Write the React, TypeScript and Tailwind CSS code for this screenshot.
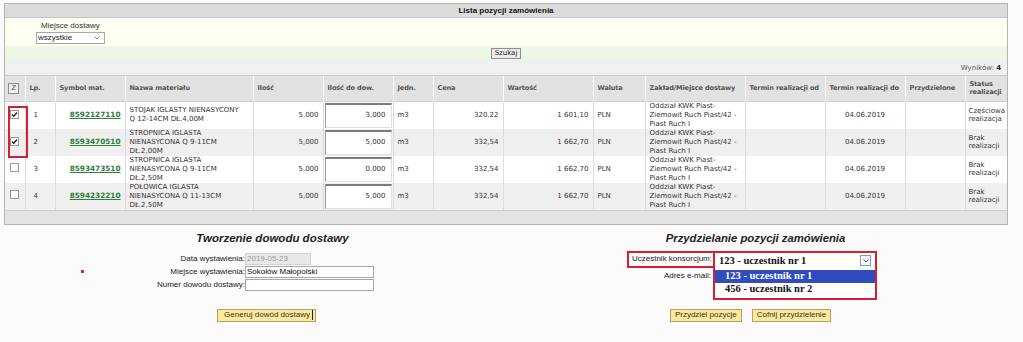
import React from "react";

const cols = [20, 30, 70, 128, 70, 70, 40, 70, 90, 52, 100, 80, 80, 60, 44];

const rows = [
  { checked: true, lp: "1", sym: "8592127110", name: ["STOJAK IGLASTY NIENASYCONY", "Q 12-14CM DŁ.4,00M"], il: "5,000", ildo: "3,000", cena: "320,22", wart: "1 601,10", status: ["Częściowa", "realizacja"] },
  { checked: true, lp: "2", sym: "8593470510", name: ["STROPNICA IGLASTA", "NIENASYCONA Q 9-11CM", "DŁ.2,00M"], il: "5,000", ildo: "5,000", cena: "332,54", wart: "1 662,70", status: ["Brak", "realizacji"] },
  { checked: false, lp: "3", sym: "8593473510", name: ["STROPNICA IGLASTA", "NIENASYCONA Q 9-11CM", "DŁ.2,50M"], il: "5,000", ildo: "0,000", cena: "332,54", wart: "1 662,70", status: ["Brak", "realizacji"] },
  { checked: false, lp: "4", sym: "8594232210", name: ["POŁOWICA IGLASTA", "NIENASYCONA Q 11-13CM", "DŁ.2,50M"], il: "5,000", ildo: "5,000", cena: "332,54", wart: "1 662,70", status: ["Brak", "realizacji"] },
];

function Check({ checked }: { checked: boolean }) {
  return (
    <span className="inline-flex h-[9px] w-[9px] items-center justify-center border border-[#9a9a9a] bg-white">
      {checked && (
        <svg width="7" height="7" viewBox="0 0 7 7">
          <path d="M1 3.5 L2.8 5.3 L6 1.5" stroke="#222" strokeWidth="1.4" fill="none" />
        </svg>
      )}
    </span>
  );
}

const th = "border-r border-white px-[4px] text-left align-middle font-bold text-[#555] whitespace-nowrap";
const td = "border-r border-[#dcdcdc] px-[4px] align-middle";

export default function App() {
  return (
    <div className="h-[342px] w-[1023px] overflow-hidden bg-[#fbfbfb] pt-[3px] font-['Liberation_Sans',Arial,sans-serif] text-[#222]">
      {/* main panel */}
      <div className="ml-[4px] w-[1004px] border border-[#b4b4b4]">
        <div className="flex h-[14px] items-center justify-center border-b border-[#c4c4c4] bg-[#dcdcdc] text-[8px] font-bold text-[#111]">
          Lista pozycji zamówienia
        </div>
        <div className="h-[28px] bg-[#fefef2] pl-[31px] pt-[3px]">
          <div className="pl-[5px] text-[8px] leading-[9px] text-[#333]">Miejsce dostawy</div>
          <div className="mt-[2px] flex h-[12px] w-[69px] items-center justify-between border border-[#a9a9a9] bg-white pl-[1px] pr-[4px] text-[8px] text-[#222]">
            <span>wszystkie</span>
            <svg width="6" height="4" viewBox="0 0 6 4">
              <path d="M0.5 0.5 L3 3 L5.5 0.5" stroke="#6a7a8a" strokeWidth="0.9" fill="none" />
            </svg>
          </div>
        </div>
        <div className="flex h-[14px] items-center justify-center bg-[#eef6e5]">
          <button className="h-[11px] border border-[#8e8e8e] bg-[#ececec] px-[3px] text-[7px] leading-[9px] text-[#222] font-['DejaVu_Sans',Verdana,sans-serif]">
            Szukaj
          </button>
        </div>
        <div className="flex h-[16px] items-center justify-end border-b border-[#c9c9c9] bg-[#f0f0f0] pr-[6px] pt-[1px] text-[7px] text-[#555] font-['DejaVu_Sans',Verdana,sans-serif]">
          Wyników:&nbsp;<b className="text-[#222]">4</b>
        </div>
        <div className="relative">
          <table className="w-[1002px] table-fixed border-collapse font-['DejaVu_Sans',Verdana,sans-serif] text-[7px] leading-[9px]">
            <colgroup>
              {cols.map((w, i) => (
                <col key={i} style={{ width: i === cols.length - 1 ? w - 2 : w }} />
              ))}
            </colgroup>
            <thead>
              <tr className="h-[25px] border-b border-[#cfcfcf] bg-[#e2e2e2] text-[6.6px] tracking-[-0.15px]">
                <th className="border-r border-white pl-[3px] text-left">
                  <span className="inline-flex h-[11px] w-[11px] items-center justify-center border border-[#8c8c8c] bg-[#eeeeee] text-[7px] font-normal text-[#444]">
                    Z
                  </span>
                </th>
                <th className={th}>Lp.</th>
                <th className={th}>Symbol mat.</th>
                <th className={th}>Nazwa materiału</th>
                <th className={th}>Ilość</th>
                <th className={th}>Ilość do dow.</th>
                <th className={th}>Jedn.</th>
                <th className={th}>Cena</th>
                <th className={th}>Wartość</th>
                <th className={th}>Waluta</th>
                <th className={th + " px-[2px]"}>Zakład/Miejsce dostawy</th>
                <th className={th + " px-[2px]"}>Termin realizacji od</th>
                <th className={th + " px-[2px]"}>Termin realizacji do</th>
                <th className={th}>Przydzielone</th>
                <th className={th + " border-r-0 px-[2px] leading-[8px]"}>
                  Status
                  <br />
                  realizacji
                </th>
              </tr>
            </thead>
            <tbody className="text-[#333]">
              {rows.map((r, i) => (
                <tr key={i} className={"h-[27px] " + (i % 2 === 1 ? "bg-[#efefef]" : "bg-white")}>
                  <td className={td + " pl-[5px]"}>
                    <Check checked={r.checked} />
                  </td>
                  <td className={td + " pl-[8px]"}>{r.lp}</td>
                  <td className={td + " text-right"}>
                    <a className="text-[7.3px] font-bold text-[#2e7d3b] underline">{r.sym}</a>
                  </td>
                  <td className={td + " whitespace-nowrap"}>
                    {r.name.map((n, k) => (
                      <div key={k}>{n}</div>
                    ))}
                  </td>
                  <td className={td + " text-right"}>{r.il}</td>
                  <td className="border-r border-[#dcdcdc] p-[1px] align-middle">
                    <div className="flex h-[25px] items-center justify-end border-t-2 border-l border-r border-b border-t-[#7b7b7b] border-l-[#9a9a9a] border-r-[#e0e0e0] border-b-[#e0e0e0] bg-white pr-[5px]">
                      {r.ildo}
                    </div>
                  </td>
                  <td className={td}>m3</td>
                  <td className={td + " text-right"}>{r.cena}</td>
                  <td className={td + " text-right"}>{r.wart}</td>
                  <td className={td}>PLN</td>
                  <td className={td + " whitespace-nowrap"}>
                    <div>Oddział KWK Piast-</div>
                    <div>Ziemowit Ruch Piast/42 -</div>
                    <div>Piast Ruch I</div>
                  </td>
                  <td className={td}></td>
                  <td className={td + " text-center"}>04.06.2019</td>
                  <td className={td}></td>
                  <td className="px-[3px] align-middle leading-[8px]">
                    <div>{r.status[0]}</div>
                    <div>{r.status[1]}</div>
                  </td>
                </tr>
              ))}
            </tbody>
          </table>
          {/* annotation box around selected checkboxes */}
          <div className="pointer-events-none absolute left-[3px] top-[30px] h-[52px] w-[20px] border-2 border-[#d42030]"></div>
        </div>
        <div className="h-[14px] border-t border-[#cfcfcf] bg-[#e4e4e4]"></div>
      </div>

      {/* bottom sections */}
      <div className="flex pl-[31px] pt-[5px]">
        {/* left */}
        <div className="w-[483px]">
          <div className="text-center text-[11.5px] font-bold italic leading-[16px] text-[#222]">Tworzenie dowodu dostawy</div>
          <div className="mt-[7px] grid grid-cols-[214px_130px] gap-y-[1px] text-[8px] text-[#222]">
            <div className="flex h-[12px] items-center justify-end">Data wystawienia:</div>
            <div className="flex h-[12px] items-center">
              <div className="flex h-[12px] w-[66px] items-center border border-[#d2d2d2] bg-[#e8e8e8] pl-[1px] text-[#9a9a9a]">2019-05-23</div>
            </div>
            <div className="flex h-[12px] items-center justify-between">
              <span className="ml-[50px] h-[3px] w-[3px] bg-[#c8303c]"></span>
              <span>Miejsce wystawienia:</span>
            </div>
            <div className="flex h-[12px] items-center">
              <div className="flex h-[12px] w-[129px] items-center border border-[#a8a8a8] bg-white pl-[1px] text-[#111]">Sokołów Małopolski</div>
            </div>
            <div className="flex h-[12px] items-center justify-end">Numer dowodu dostawy:</div>
            <div className="flex h-[12px] items-center">
              <div className="h-[12px] w-[129px] border border-[#a8a8a8] bg-white"></div>
            </div>
          </div>
          <div className="mt-[18px] flex justify-center pr-[12px]">
            <button className="flex h-[13px] items-center border border-[#b8a060] bg-[#fde99b] pl-[6px] pr-[2px] text-[8px] font-normal text-[#333]">
              Generuj dowód dostawy
              <span className="ml-[2px] h-[10px] w-[1px] bg-[#222]"></span>
            </button>
          </div>
        </div>

        {/* right */}
        <div className="w-[483px]">
          <div className="text-center text-[11.3px] font-bold italic leading-[16px] text-[#222]">Przydzielanie pozycji zamówienia</div>
          <div className="mt-[5px] flex text-[8px] text-[#222]">
            <div className="flex w-[199px] flex-col items-end">
              <div className="flex h-[17px] items-center border-2 border-r-0 border-[#d42030] pl-[3px] pr-[1px]">Uczestnik konsorcjum:</div>
              <div className="mt-[2px] pr-[2px]">Adres e-mail:</div>
            </div>
            <div className="w-[164px] border-2 border-[#d42030] bg-white pt-[1px] font-['Liberation_Serif','Times_New_Roman',serif] text-[10.5px] font-bold leading-[12px]">
              <div className="flex h-[14px] items-center justify-between pl-[4px] pr-[4px] text-[#111]">
                <span>123 - uczestnik nr 1</span>
                <span className="flex h-[11px] w-[11px] items-center justify-center border border-[#7f9db9] bg-[#f4f8fc]">
                  <svg width="6" height="4" viewBox="0 0 6 4">
                    <path d="M0.5 0.5 L3 3 L5.5 0.5" stroke="#4d6185" strokeWidth="1" fill="none" />
                  </svg>
                </span>
              </div>
              <div className="mt-[2px] flex h-[13px] items-center bg-[#2f4dbf] pl-[10px] text-white">123 - uczestnik nr 1</div>
              <div className="flex h-[13px] items-center pl-[10px] text-[#111]">456 - uczestnik nr 2</div>
              <div className="h-[2px]"></div>
            </div>
          </div>
          <div className="mt-[9px] flex justify-center gap-[10px] pr-[10px]">
            <button className="flex h-[13px] items-center border border-[#b8a060] bg-[#fde99b] px-[4px] text-[8px] text-[#333]">Przydziel pozycje</button>
            <button className="flex h-[13px] items-center border border-[#b8a060] bg-[#fde99b] px-[4px] text-[8px] text-[#333]">Cofnij przydzielenie</button>
          </div>
        </div>
      </div>
    </div>
  );
}
